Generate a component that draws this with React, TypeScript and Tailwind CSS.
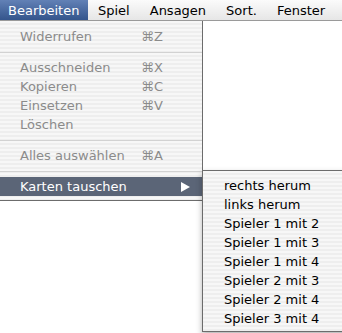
import React from "react";

type Item =
  | { kind: "item"; label: string; shortcut?: string; disabled?: boolean }
  | { kind: "sep" };

const MAIN: Item[] = [
  { kind: "item", label: "Widerrufen", shortcut: "⌘Z", disabled: true },
  { kind: "sep" },
  { kind: "item", label: "Ausschneiden", shortcut: "⌘X", disabled: true },
  { kind: "item", label: "Kopieren", shortcut: "⌘C", disabled: true },
  { kind: "item", label: "Einsetzen", shortcut: "⌘V", disabled: true },
  { kind: "item", label: "Löschen", disabled: true },
  { kind: "sep" },
  { kind: "item", label: "Alles auswählen", shortcut: "⌘A", disabled: true },
  { kind: "sep" },
];

const SUB = [
  "rechts herum",
  "links herum",
  "Spieler 1 mit 2",
  "Spieler 1 mit 3",
  "Spieler 1 mit 4",
  "Spieler 2 mit 3",
  "Spieler 2 mit 4",
  "Spieler 3 mit 4",
];

const stripes =
  "bg-[repeating-linear-gradient(to_bottom,#f7f7f7_0px,#f7f7f7_2px,#eeeeee_2px,#eeeeee_4px)]";

export default function App() {
  return (
    <div className="relative w-[342px] h-[333px] overflow-hidden bg-white font-['DejaVu_Sans',sans-serif] text-[13px] leading-none">
      {/* menu bar */}
      <div className="flex h-[21px] items-center border-b border-[#9a9a9a] bg-gradient-to-b from-[#fbfbfb] to-[#e6e6e6] text-black">
        <div className="flex h-full w-[88px] items-center pl-[8px] text-white bg-gradient-to-b from-[#6281b6] to-[#34558c]">
          Bearbeiten
        </div>
        <div className="ml-[10px] flex gap-[20px]">
          <span>Spiel</span>
          <span>Ansagen</span>
          <span>Sort.</span>
          <span>Fenster</span>
        </div>
      </div>

      {/* Bearbeiten menu */}
      <div
        className={`absolute left-0 top-[21px] w-[203px] border-r border-b border-[#6c6c6c] pt-[6px] pb-[4px] ${stripes}`}
      >
        {MAIN.map((it, i) =>
          it.kind === "sep" ? (
            <div key={i} className="flex h-[12px] items-center">
              <div className="h-px w-full bg-[#d2d2d2]" />
            </div>
          ) : (
            <div
              key={i}
              className={`flex h-[19px] items-center pl-[20px] ${
                it.disabled ? "text-[#8b8b8b]" : "text-black"
              }`}
            >
              <span className="w-[121px]">{it.label}</span>
              <span>{it.shortcut}</span>
            </div>
          )
        )}
        <div className="flex h-[19px] items-center bg-[#5b6577] pl-[20px] text-white">
          <span className="flex-1">Karten tauschen</span>
          <svg width="9" height="10" viewBox="0 0 9 10" className="mr-[12px]">
            <path d="M0 0 L9 5 L0 10 Z" fill="white" />
          </svg>
        </div>
      </div>

      {/* Karten tauschen submenu */}
      <div
        className={`absolute left-[202px] top-[170px] w-[150px] border border-[#6c6c6c] pt-[5px] pb-[3px] shadow-[0_3px_6px_rgba(0,0,0,0.3)] ${stripes}`}
      >
        {SUB.map((s) => (
          <div key={s} className="flex h-[19px] items-center pl-[21px] text-black">
            {s}
          </div>
        ))}
      </div>
    </div>
  );
}
